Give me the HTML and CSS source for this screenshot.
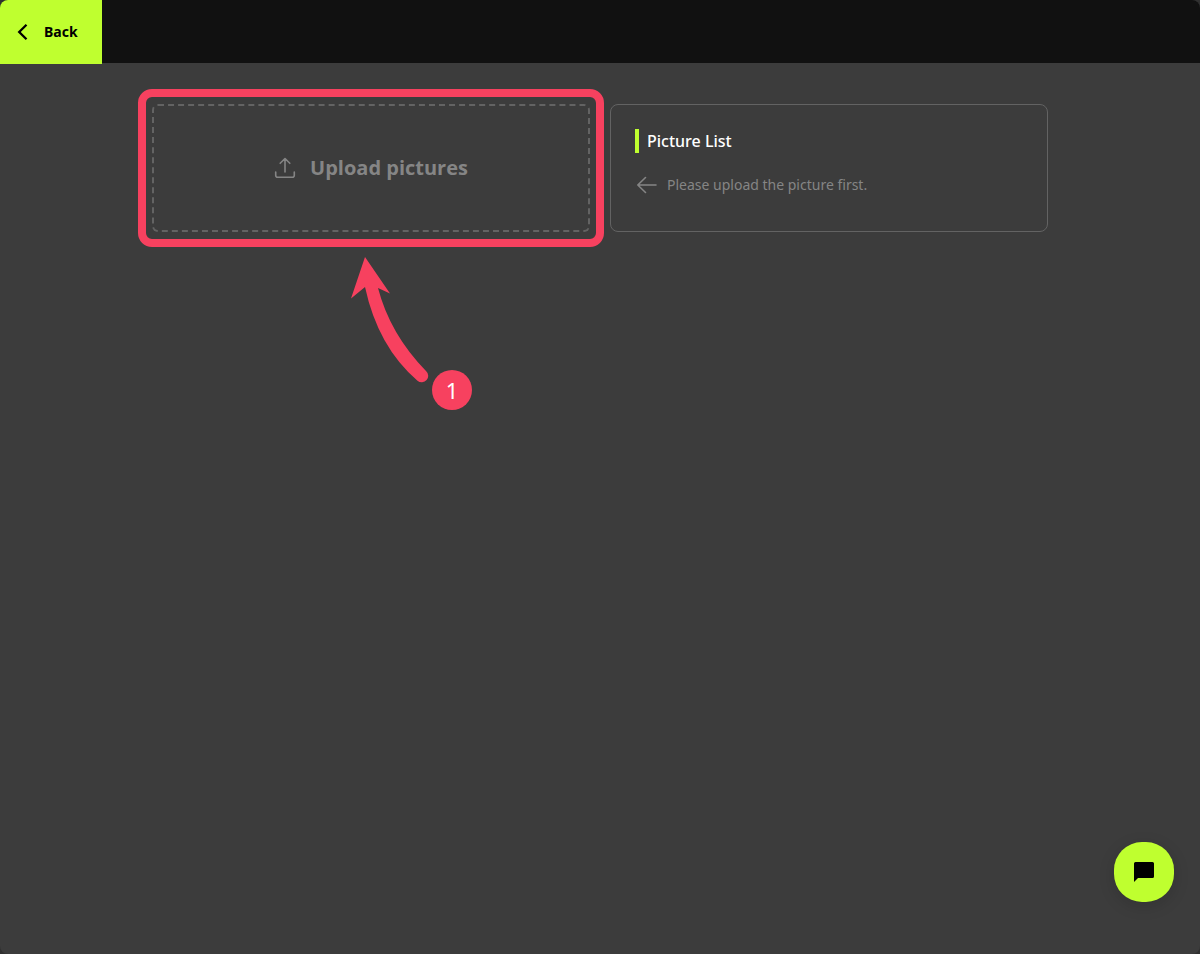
FILE: index.html
```html
<!DOCTYPE html>
<html lang="en">
<head>
<meta charset="utf-8">
<title>Upload pictures</title>
<meta name="viewport" content="width=device-width, initial-scale=1">
<link rel="stylesheet" href="styles.css">
</head>
<body>
<div class="app">
  <header class="topbar">
    <button class="back" type="button">
      <svg class="back-icon" width="12" height="18" viewBox="0 0 12 18" aria-hidden="true"><path d="M9.5 1.8 2.2 9l7.3 7.2" fill="none" stroke="currentColor" stroke-width="2.3"/></svg>
      <span class="back-label">Back</span>
    </button>
  </header>
  <main class="content">
    <section class="upload-area">
      <button class="dropzone" type="button">
        <svg width="22" height="22" viewBox="0 0 22 22" fill="none" stroke="currentColor" stroke-width="1.6" stroke-linecap="round" stroke-linejoin="round" aria-hidden="true"><path d="M11 15V1.500M6.200 6.300l4.800-4.800 4.800 4.800M1.700 15v3.200a2 2 0 0 0 2 2h14.600a2 2 0 0 0 2-2V15"/></svg>
        <span class="dropzone-label">Upload pictures</span>
      </button>
      <div class="highlight"></div>
      <svg class="pointer" width="90" height="130" viewBox="0 0 90 130" aria-hidden="true"><path d="M25 2 50 38.500 38 33Q50 79 86 116A6.400 6.400 0 0 1 77.500 125.700Q38 92 25 32L11 43.500Z" fill="#f7415f"/></svg>
      <span class="step">1</span>
    </section>
    <section class="list">
      <h2 class="list-title">Picture List</h2>
      <p class="list-empty">
        <svg width="24" height="24" viewBox="0 0 24 24" fill="none" stroke="currentColor" stroke-width="1.6" stroke-linecap="round" stroke-linejoin="round" aria-hidden="true"><path d="M21 12H2.800M10.500 4.500 2.800 12l7.700 7.500"/></svg>
        Please upload the picture first.
      </p>
    </section>
  </main>
  <button class="chat" type="button" aria-label="Open chat">
    <svg width="20" height="20" viewBox="0 0 20 20" aria-hidden="true"><path d="M1.500 0h17a1.500 1.500 0 0 1 1.500 1.500v13a1.500 1.500 0 0 1-1.500 1.500H4l-4 4V1.500A1.500 1.500 0 0 1 1.500 0Z" fill="#000"/></svg>
  </button>
</div>
</body>
</html>
```
FILE: styles.css
```css
* {
  box-sizing: border-box;
}

body {
  margin: 0;
  background: #303030;
  font-family: "Noto Sans", "Open Sans", sans-serif;
}

button {
  font-family: inherit;
  cursor: pointer;
}

.app {
  min-height: 100vh;
  background: #3c3c3c;
  border-radius: 8px;
  overflow: hidden;
}

.topbar {
  display: flex;
  height: 64px;
  background: linear-gradient(#3c3c3c, #3c3c3c) bottom / 100% 1px no-repeat #111;
}

.back {
  display: flex;
  align-items: center;
  gap: 15px;
  padding: 0 24px 0 17px;
  border: 0;
  background: #bfff2f;
  color: #000;
  font-size: 14px;
  font-weight: 700;
}

.back-label,
.dropzone-label {
  padding-bottom: 2px;
}

.content {
  display: grid;
  grid-template-columns: 1fr 1fr;
  gap: 20px;
  max-width: 896px;
  margin: 40px auto 0;
}

.upload-area {
  position: relative;
  display: flex;
}

.dropzone {
  flex: 1;
  display: flex;
  align-items: center;
  justify-content: center;
  gap: 14px;
  border: 2px dashed #636363;
  border-radius: 6px;
  background: transparent;
  color: #858585;
  font-family: "Open Sans", "Noto Sans", sans-serif;
  font-size: 20px;
  font-weight: 700;
}

.highlight {
  position: absolute;
  inset: -15px -14px;
  border: 8px solid #f7415f;
  border-radius: 14px;
  pointer-events: none;
}

.pointer {
  position: absolute;
  top: 151px;
  left: 188px;
}

.step {
  position: absolute;
  top: 266px;
  left: 280px;
  width: 40px;
  height: 40px;
  border-radius: 50%;
  background: #f7415f;
  color: #fff;
  font-size: 22px;
  line-height: 40px;
  text-align: center;
}

.list {
  display: flex;
  flex-direction: column;
  gap: 20px;
  padding: 24px 24px 34px;
  border: 1px solid #636363;
  border-radius: 8px;
}

.list-title {
  margin: 0;
  padding-left: 8px;
  border-left: 4px solid #bfff2f;
  color: #fff;
  font-size: 16px;
  font-weight: 500;
  line-height: 24px;
}

.list-empty {
  display: flex;
  align-items: center;
  gap: 8px;
  margin: 0;
  color: #858585;
  font-size: 14px;
  line-height: 24px;
}

.chat {
  position: fixed;
  right: 26px;
  bottom: 52px;
  display: flex;
  align-items: center;
  justify-content: center;
  width: 60px;
  height: 60px;
  border: 0;
  border-radius: 28px;
  background: #bfff2f;
  box-shadow: 0 4px 16px rgba(0, 0, 0, 0.15);
}
```
